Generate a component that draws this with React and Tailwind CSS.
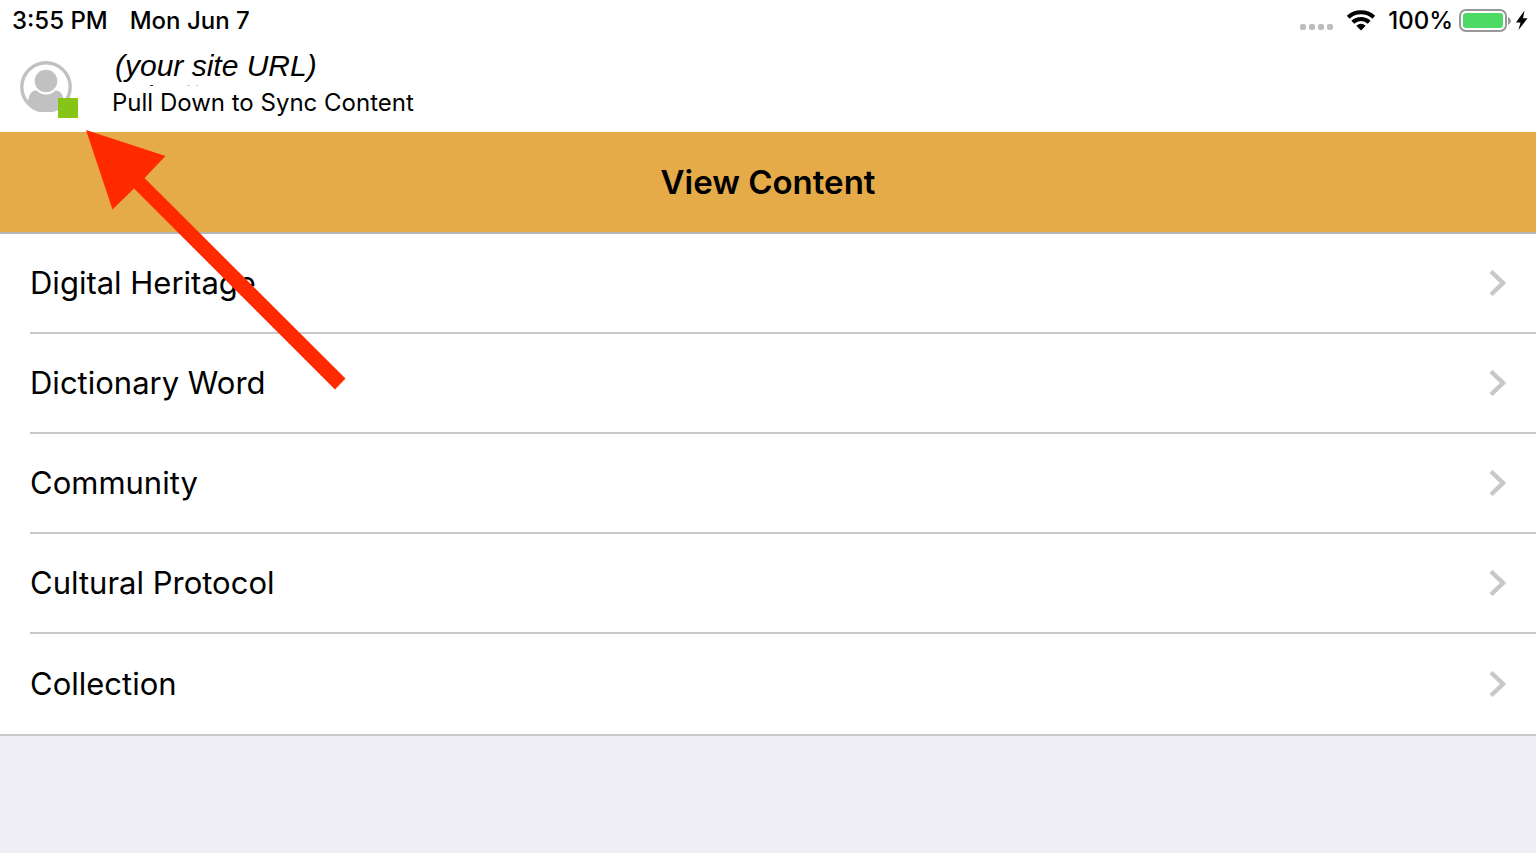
const items = [
  "Digital Heritage",
  "Dictionary Word",
  "Community",
  "Cultural Protocol",
  "Collection",
];

function StatusBar() {
  return (
    <div className="flex h-[42px] items-center justify-between pr-[7px] pl-3 text-[24px] leading-10 font-medium">
      <div className="flex gap-[22px]">
        <time>3:55 PM</time>
        <span>Mon Jun 7</span>
      </div>
      <div className="flex items-center">
        <svg width="34" height="8" viewBox="0 0 34 8" fill="#bdbdbd" className="mt-3 mr-3" aria-hidden="true">
          <rect x="0" y="1" width="6" height="6" rx="2" />
          <rect x="9" y="1" width="6" height="6" rx="2" />
          <rect x="18" y="1" width="6" height="6" rx="2" />
          <rect x="27" y="1" width="6" height="6" rx="2" />
        </svg>
        <svg width="30" height="22" viewBox="0 0 30 22" className="mr-3" aria-hidden="true">
          <g fill="none" stroke="#000" strokeWidth="4.2">
            <path d="M2.200 7.200 C9.500 .6 20.500 .6 27.800 7.200" />
            <path d="M6.800 12.200 C11.500 7.900 18.500 7.900 23.200 12.200" />
          </g>
          <path d="M10.300 15.800 Q15 11.800 19.700 15.800 L15 20.500 Z" />
        </svg>
        <span>100%</span>
        <svg width="54" height="24" viewBox="0 0 54 24" className="ml-1" aria-hidden="true">
          <rect x="3" y="1" width="46" height="21" rx="6" fill="#fff" stroke="#989898" strokeWidth="2" />
          <rect x="6" y="4" width="40" height="15" rx="3" fill="#4cd964" />
          <path d="M51 8 Q54 9.500 54 12 T51 16 Z" fill="#989898" />
        </svg>
        <svg width="14" height="22" viewBox="0 0 14 22" className="ml-1" aria-hidden="true">
          <path d="M9.500 .5 L1 12.500 H5.500 L3.500 20 L12.500 8.300 H8 Z" />
        </svg>
      </div>
    </div>
  );
}

function Avatar() {
  return (
    <div className="relative h-[52px] w-[52px] shrink-0">
      <svg width="52" height="52" viewBox="0 0 52 52" role="img" aria-label="User profile">
        <clipPath id="avatar-base">
          <rect width="52" height="51" />
        </clipPath>
        <clipPath id="avatar-disc">
          <circle cx="26" cy="26" r="25" />
        </clipPath>
        <g clipPath="url(#avatar-base)">
          <circle cx="26" cy="26" r="24.200" fill="#fff" stroke="#c1c1c1" strokeWidth="3.400" />
          <path
            d="M6 52 L8.500 38 C9.500 32 12.500 29.500 16.500 29.500 Q20.500 33.600 26 33.600 Q31.500 33.600 35.500 29.500 C39.500 29.500 42.500 32 43.500 38 L46 52 Z"
            fill="#c1c1c1"
            clipPath="url(#avatar-disc)"
          />
          <circle cx="26" cy="20" r="11.300" fill="#c1c1c1" />
        </g>
      </svg>
      <span className="absolute top-[37px] left-[38px] h-5 w-5 bg-[#86c417]" />
    </div>
  );
}

function SiteHeader() {
  return (
    <header className="flex h-[90px] items-start pl-5">
      <div className="pt-[19px]">
        <Avatar />
      </div>
      <div className="pt-[6px] pl-10">
        <p className="pl-[3px] font-['Liberation_Sans',Arial,sans-serif] text-[30px] leading-9 italic">(your site URL)</p>
        <svg width="90" height="3" viewBox="0 0 90 3" className="block" aria-hidden="true">
          <path d="M38 1h3v1h-3z" fill="#333" />
          <path d="M75 1h3v1h-3zM84 1h2v1h-2z" fill="#ccc" />
        </svg>
        <p className="text-[24px] leading-8">Pull Down to Sync Content</p>
      </div>
    </header>
  );
}

function Row({ label }) {
  return (
    <li className="group pl-[30px] last:border-b-2 last:border-[#c8c7cc]">
      <a
        href="#"
        className="flex h-[100px] items-center justify-between border-b-2 border-[#c8c7cc] pr-[30px] text-[31px] leading-10 group-last:border-b-0"
      >
        <span>{label}</span>
        <svg width="17" height="26" viewBox="0 0 17 26" fill="none" stroke="#c7c7cc" strokeWidth="4.400" aria-hidden="true">
          <path d="M2 1.500 L14 13 L2 24.500" />
        </svg>
      </a>
    </li>
  );
}

function PointerArrow() {
  return (
    <svg
      width="260"
      height="260"
      viewBox="0 0 260 260"
      className="pointer-events-none absolute top-[130px] left-[86px]"
      aria-hidden="true"
    >
      <path d="M0 0 L79.500 26 L58.500 48 L259.500 248.500 L249 259.500 L48 58.500 L26.500 79.500 Z" fill="#ff2a00" />
    </svg>
  );
}

export default function App() {
  return (
    <div className="relative min-h-screen bg-[#efeef4] font-[Inter,sans-serif] text-black">
      <div className="bg-white">
        <StatusBar />
        <SiteHeader />
        <main>
          <h1 className="flex h-[102px] items-center justify-center border-b-2 border-[#b8b6b3] bg-[#e5ab49] text-[33px] leading-10 font-semibold">
            View Content
          </h1>
          <ul>
            {items.map((label) => (
              <Row key={label} label={label} />
            ))}
          </ul>
        </main>
      </div>
      <PointerArrow />
    </div>
  );
}
